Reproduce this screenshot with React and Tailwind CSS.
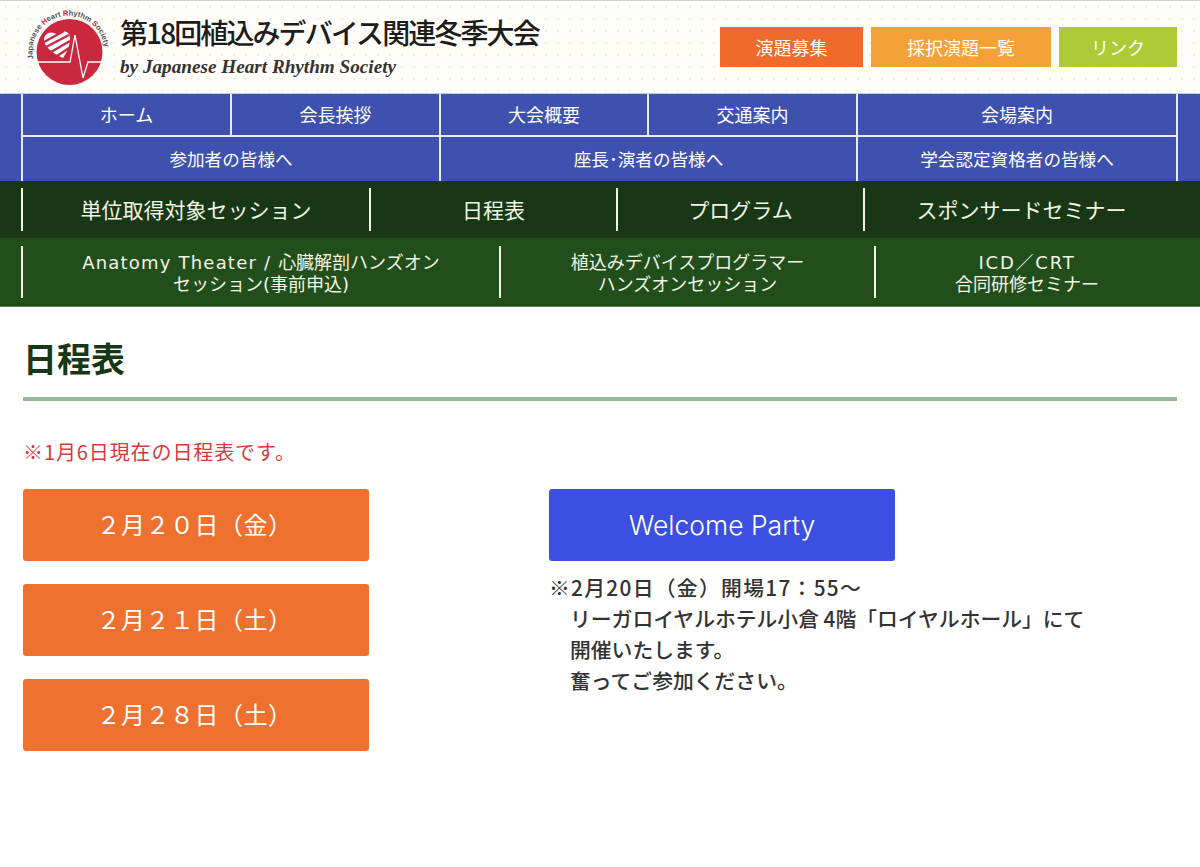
import React from "react";

const FONT = "font-['Noto_Sans_CJK_JP','Noto_Sans',sans-serif]";
const LATIN_WIDE = "font-['DejaVu_Sans','Noto_Sans_CJK_JP',sans-serif]";

// viewBox uses page coordinates so the logo can be checked against the screenshot directly
const Logo = () => (
  <svg viewBox="26 8 86 84" className="w-[86px] h-[84px] shrink-0 mt-[7px]">
    <defs>
      <path id="logoArc" d="M33.5 60 A36 36 0 1 1 103.5 60" fill="none" />
    </defs>
    <circle cx="69.5" cy="52" r="33" fill="#c9283e" />
    <path d="M37 62 H70 L75 35 L83 78 L88 62 H102" fill="none" stroke="#fff" strokeWidth="1.3" />
    <path d="M63 58 C52 53 44 46 44 40 C44 33 52 30 57 35 C60 29 70 30 70 38 C70 46 67 52 63 58 Z" fill="#fff" />
    <path d="M44 42 L64 31 M46 47 L69 35 M51 52 L70 41 M57 56 L69 48" stroke="#c9283e" strokeWidth="2.3" />
    <text fontSize="7.6" fill="#555" fontFamily="'Liberation Sans',sans-serif" fontWeight="700">
      <textPath href="#logoArc" startOffset="1">
        Japanese <tspan fill="#c9283e">H</tspan>eart <tspan fill="#c9283e">R</tspan>hythm <tspan fill="#c9283e">S</tspan>ociety
      </textPath>
    </text>
  </svg>
);

const TopLink = ({ className, children }) => (
  <a className={`h-[40px] flex items-center justify-center text-white text-[18px] ${className}`}>{children}</a>
);

const BlueCell = ({ className = "", children }) => (
  <a className={`flex items-center justify-center text-white border-l-2 border-[#e8ecf5] ${className}`}>
    {children}
  </a>
);

const GreenCell = ({ className = "", children }) => (
  <a className={`flex items-center justify-center text-center text-[#f3f4e4] border-l-2 border-[#f3f4e4] ${className}`}>
    {children}
  </a>
);

const DayButton = ({ children }) => (
  <a className="w-[346px] h-[72px] pb-[2px] pr-[3px] flex items-center justify-center bg-[#ee7130] rounded-[3px] text-white text-[24px] tracking-[0.5px]">
    {children}
  </a>
);

export default function App() {
  return (
    <div className={`${FONT} w-[1200px] h-[867px] bg-white overflow-hidden`}>
      {/* header */}
      <header className="h-[93px] border-t border-[#d0d0d0] bg-[#fffefb] bg-[radial-gradient(#fbf0e0_1.3px,transparent_1.5px)] bg-size-[12px_12px] flex pl-[26px]">
        <Logo />
        <div className="ml-[8px] flex flex-col">
          <h1 className="mt-[13px] text-[28px] leading-[36px] font-medium text-[#1c1c1c] tracking-[-1.9px] whitespace-nowrap">
            第18回植込みデバイス関連冬季大会
          </h1>
          <p className="mt-[6px] font-['Liberation_Serif',serif] italic font-bold text-[19.2px] leading-[22px] text-[#333] whitespace-nowrap">
            by Japanese Heart Rhythm Society
          </p>
        </div>
        <nav className="ml-auto mt-[26px] mr-[23px] flex gap-[8px]">
          <TopLink className="w-[143px] bg-[#ef6a2c]">演題募集</TopLink>
          <TopLink className="w-[180px] bg-[#f4a138]">採択演題一覧</TopLink>
          <TopLink className="w-[118px] bg-[#aeca36]">リンク</TopLink>
        </nav>
      </header>

      {/* blue nav */}
      <nav className="bg-[#3f51ae] border-t border-[#c5cbe6] h-[88px] px-[21px]">
        <div className="w-[1157px] h-full flex flex-col border-r-2 border-[#e8ecf5]">
          <div className="h-[43px] grid grid-cols-[209px_209px_208px_209px_1fr] border-b-2 border-[#e8ecf5] text-[18px]">
            <BlueCell>ホーム</BlueCell>
            <BlueCell>会長挨拶</BlueCell>
            <BlueCell>大会概要</BlueCell>
            <BlueCell>交通案内</BlueCell>
            <BlueCell>会場案内</BlueCell>
          </div>
          <div className="flex-1 grid grid-cols-[418px_417px_1fr] text-[17.6px]">
            <BlueCell>参加者の皆様へ</BlueCell>
            <BlueCell>座長･演者の皆様へ</BlueCell>
            <BlueCell>学会認定資格者の皆様へ</BlueCell>
          </div>
        </div>
      </nav>

      {/* green nav */}
      <nav className="bg-[#173715] h-[57px] px-[21px] py-[7px]">
        <div className="w-[1157px] h-full grid grid-cols-[348px_247px_247px_1fr] text-[21px]">
          <GreenCell>単位取得対象セッション</GreenCell>
          <GreenCell>日程表</GreenCell>
          <GreenCell>プログラム</GreenCell>
          <GreenCell>スポンサードセミナー</GreenCell>
        </div>
      </nav>
      <nav className="bg-[#214e1b] h-[69px] px-[21px] py-[8px] border-b border-[#4c8a5c]">
        <div className={`${LATIN_WIDE} w-[1157px] h-full grid grid-cols-[478px_375px_1fr] text-[18px] leading-[22px]`}>
          <GreenCell className="pt-[3px]">
            <span>
              <span className="tracking-[1.2px]">Anatomy Theater / </span>心臓解剖ハンズオン
              <br />
              セッション(事前申込)
            </span>
          </GreenCell>
          <GreenCell className="pt-[3px]">
            <span>
              植込みデバイスプログラマー
              <br />
              ハンズオンセッション
            </span>
          </GreenCell>
          <GreenCell className="pt-[3px]">
            <span>
              <span className="tracking-[1.8px]">ICD／CRT</span>
              <br />
              合同研修セミナー
            </span>
          </GreenCell>
        </div>
      </nav>

      {/* content */}
      <main className="px-[23px]">
        <h2 className="h-[94px] border-b-4 border-[#96bb96] pt-[29px] text-[34px] leading-[44px] font-bold text-[#173715]">
          日程表
        </h2>
        <p className="mt-[38px] text-[20px] leading-[26px] tracking-[0.9px] text-[#d8393a]">※1月6日現在の日程表です。</p>
        <div className="mt-[24px] flex gap-[180px]">
          <div className="flex flex-col gap-[23px]">
            <DayButton>２月２０日（金）</DayButton>
            <DayButton>２月２１日（土）</DayButton>
            <DayButton>２月２８日（土）</DayButton>
          </div>
          <div>
            <a className="w-[346px] h-[72px] pt-[1px] flex items-center justify-center bg-[#3b4fe0] rounded-[3px] text-white font-['Inter',sans-serif] font-light text-[26.5px]">
              Welcome Party
            </a>
            <div className="mt-[11px] text-[20.8px] leading-[31px] font-medium text-[#333] whitespace-nowrap">
              <p className="tracking-[1.3px]">※2月20日（金）開場17：55～</p>
              <p className="pl-[21px]">リーガロイヤルホテル小倉 4階「ロイヤルホール」にて</p>
              <p className="pl-[21px]">開催いたします。</p>
              <p className="pl-[21px]">奮ってご参加ください。</p>
            </div>
          </div>
        </div>
      </main>
    </div>
  );
}
